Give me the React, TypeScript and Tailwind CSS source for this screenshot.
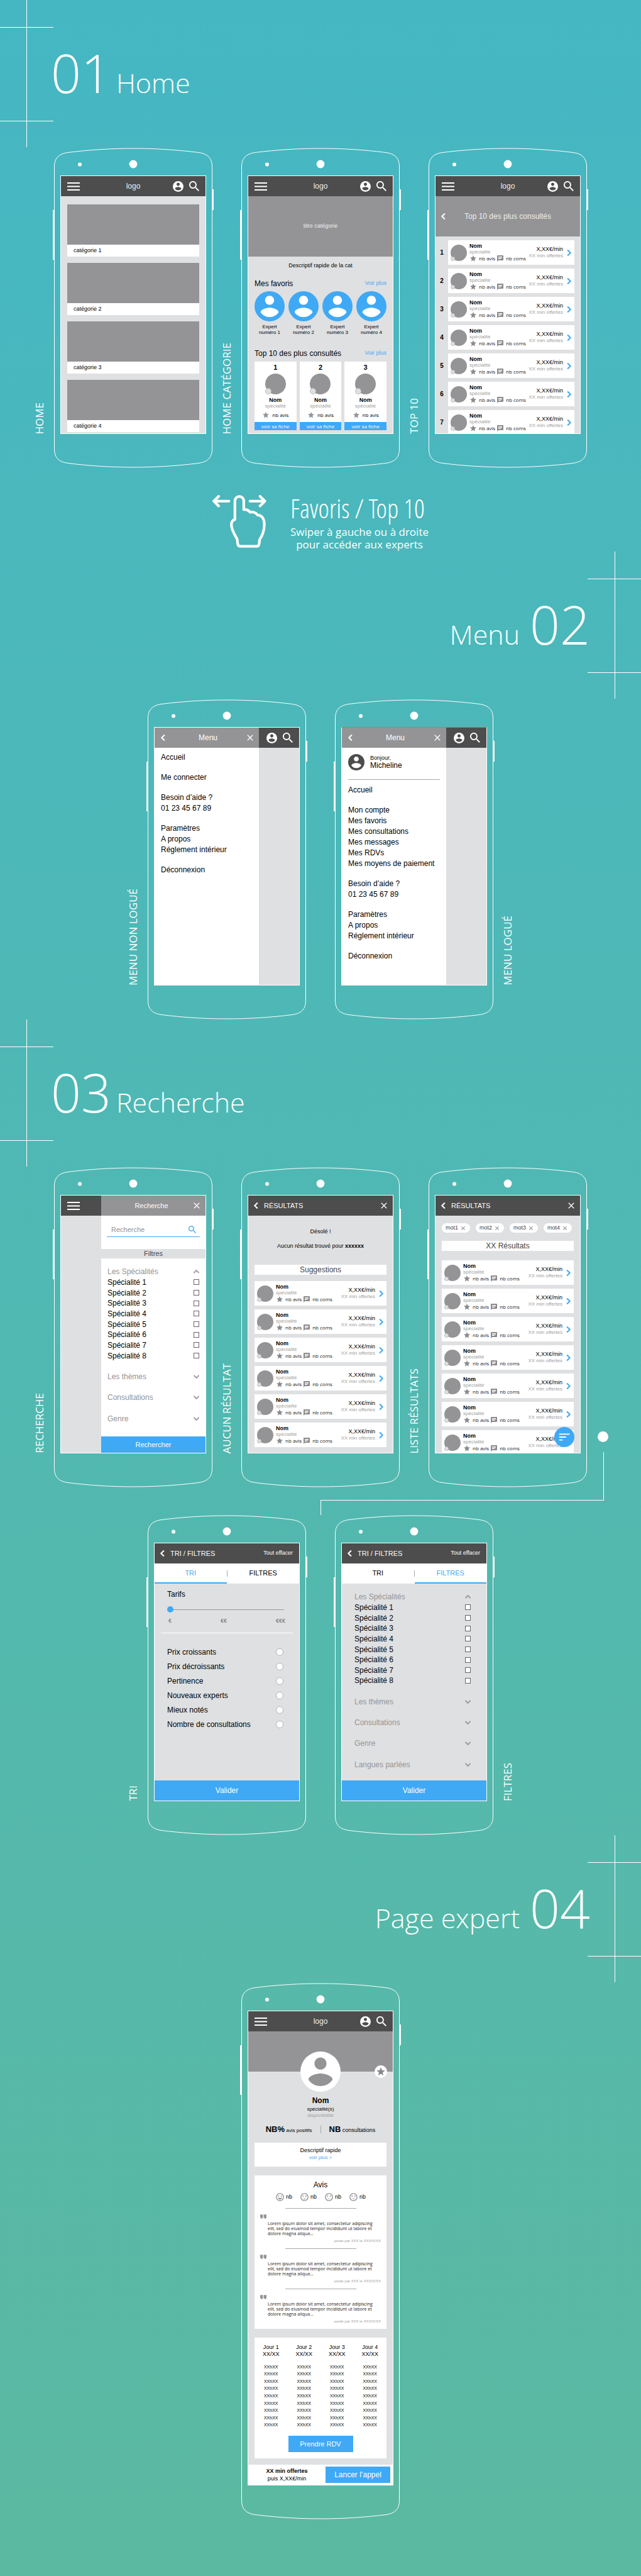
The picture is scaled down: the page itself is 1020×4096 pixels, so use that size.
import React from "react";
import {
  MdClose,
  MdSentimentDissatisfied,
  MdSentimentNeutral,
  MdSentimentSatisfied,
  MdSentimentVerySatisfied,
  MdSort,
  MdStar,
  MdChat,
} from "react-icons/md";

type Children = { children?: React.ReactNode };

/* ---------- icons ---------- */

const PERSON =
  "M12 5c1.66 0 3 1.34 3 3s-1.34 3-3 3-3-1.34-3-3 1.34-3 3-3zm0 14.2c-2.5 0-4.71-1.28-6-3.22.03-1.99 4-3.08 6-3.08 1.99 0 5.97 1.09 6 3.08-1.29 1.94-3.5 3.22-6 3.22z";

function Account({ className, ring, person }: { className: string; ring: string; person: string }) {
  return (
    <svg viewBox="2 2 20 20" className={className} aria-hidden="true">
      <circle cx="12" cy="12" r="10" fill={ring} />
      <path d={PERSON} fill={person} />
    </svg>
  );
}

function Search({ className }: { className: string }) {
  return (
    <svg viewBox="3 3 17.5 17.5" className={className} fill="currentColor" aria-hidden="true">
      <path d="M15.5 14h-.79l-.28-.27C15.41 12.59 16 11.11 16 9.5 16 5.91 13.09 3 9.5 3S3 5.91 3 9.5 5.91 16 9.5 16c1.61 0 3.09-.59 4.23-1.57l.27.28v.79l5 4.99L20.49 19l-4.99-5zm-6 0C7.01 14 5 11.99 5 9.5S7.01 5 9.5 5 14 7.01 14 9.5 11.99 14 9.5 14z" />
    </svg>
  );
}

function Burger() {
  return (
    <button aria-label="Ouvrir le menu" className="block w-5">
      <svg viewBox="0 0 20 13" className="h-[13px] w-5" fill="#fff" aria-hidden="true">
        <rect width="20" height="2" />
        <rect y="5.5" width="20" height="2" />
        <rect y="11" width="20" height="2" />
      </svg>
    </button>
  );
}

function Chevron({ dir, className }: { dir: "left" | "right" | "up" | "down"; className: string }) {
  const shapes = {
    left: { box: "8 6 8 12", d: "M15.41 7.41 14 6l-6 6 6 6 1.41-1.41L10.83 12z" },
    right: { box: "8 6 8 12", d: "M10 6 8.59 7.41 13.17 12l-4.58 4.59L10 18l6-6z" },
    up: { box: "6 8 12 8", d: "m12 8-6 6 1.41 1.41L12 10.83l4.59 4.58L18 14z" },
    down: { box: "6 8 12 8", d: "M16.59 8.59 12 13.17 7.41 8.59 6 10l6 6 6-6z" },
  };
  return (
    <svg
      viewBox={shapes[dir].box}
      className={className}
      fill="currentColor"
      stroke="currentColor"
      strokeWidth="0.6"
      aria-hidden="true"
    >
      <path d={shapes[dir].d} />
    </svg>
  );
}

function Quote() {
  return (
    <svg viewBox="5 7 15 10" className="h-[7px] w-[10px] text-[#949496]" fill="currentColor" aria-hidden="true">
      <path d="M5 7h6.4v7.6L9.600 17H7.200V15H5zM13.300 7H20v7.600L18 17H15.500V15H13.300z" />
    </svg>
  );
}

function SwipeHand() {
  return (
    <svg
      viewBox="38 48 305 300"
      className="h-[85px] w-[86px]"
      fill="none"
      stroke="#fff"
      strokeWidth="15"
      strokeLinecap="round"
      strokeLinejoin="round"
      aria-hidden="true"
    >
      <path d="M165 186V81a25 25 0 0 1 50 0v49c15-2 27 4 36 15 17-4 33 3 41 15 24 1 38 20 39 52 0 42-12 66-27 88-1 27-4 37-15 37h-94c-13 0-15-10-17-40-15-25-33-54-33-82 0-15 8-26 20-29z" />
      <path d="M47 82h84M73 55 46 82l27 27M250 82h84M307 55l27 27-27 27" />
    </svg>
  );
}

/* ---------- page furniture ---------- */

function Cross({ side }: { side: "left" | "right" }) {
  const x = side === "left" ? 42 : 43;
  return (
    <svg viewBox="0 0 85 234" className="h-[234px] w-[85px] shrink-0" fill="#fff" aria-hidden="true">
      <rect x={x} width="1" height="234" />
      <rect y="43" width="85" height="1" />
      <rect y="192" width="85" height="1" />
    </svg>
  );
}

function SectionTitle({ number, name, side }: { number: string; name: string; side: "left" | "right" }) {
  const left = side === "left";
  return (
    <header className={left ? "flex h-[235px]" : "flex h-[235px] flex-row-reverse"}>
      <Cross side={side} />
      <h2
        className={
          left
            ? "-mx-1 flex items-baseline gap-2 pt-[74px] font-light"
            : "-mx-1 flex flex-row-reverse items-baseline gap-4 pt-[74px] font-light"
        }
      >
        <span className="text-[84px] leading-[84px]">{number}</span>
        <span className="text-[43px] leading-[43px]">{name}</span>
      </h2>
    </header>
  );
}

function SideLabel({ children, right }: Children & { right?: boolean }) {
  return (
    <div className={right ? "flex h-[455px] w-[42px] items-end pl-[11px]" : "flex h-[455px] w-[42px] items-end justify-end pr-[11px]"}>
      <span className="rotate-180 text-[17px] leading-[20px] whitespace-nowrap [writing-mode:vertical-rl]">{children}</span>
    </div>
  );
}

function Phone({ children, tall, tint = "bg-[#dfe0e2]" }: Children & { tall?: boolean; tint?: string }) {
  const h = tall ? 853 : 509;
  return (
    <div className="relative w-[256px] px-3 pt-[44px] pb-[54px]">
      <svg viewBox={`0 0 256 ${h}`} className="absolute inset-0 h-full w-full" fill="#fff" aria-hidden="true">
        <path
          d={`M2.500 30C2.500 17 9 9.500 24 7.500C60 3 95 1 128 1C161 1 196 3 232 7.500C247 9.500 253.500 17 253.500 30V${h - 30}C253.500 ${h - 17} 247 ${h - 9.5} 232 ${h - 7.5}C196 ${h - 3} 161 ${h - 1} 128 ${h - 1}C95 ${h - 1} 60 ${h - 3} 24 ${h - 7.5}C9 ${h - 9.5} 2.500 ${h - 17} 2.500 ${h - 30}Z`}
          fill="none"
          stroke="#fff"
        />
        <circle cx="128" cy="26" r="6.400" />
        <circle cx="43" cy="26.500" r="3" />
        <rect x="0" y="99" width="2.500" height="79" />
        <rect x="253.500" y="66" width="2.500" height="33" />
      </svg>
      <div
        className={`relative flex flex-col overflow-hidden border border-white font-['Liberation_Sans',Arial,sans-serif] text-black ${tint} ${
          tall ? "h-[755px]" : "h-[411px]"
        }`}
      >
        {children}
      </div>
    </div>
  );
}

/* ---------- screen parts ---------- */

function UserActions() {
  return (
    <div className="flex items-center justify-end gap-[9px] text-white">
      <button aria-label="Mon compte">
        <Account className="block h-[17px] w-[17px]" ring="#fff" person="#4d4d4d" />
      </button>
      <button aria-label="Rechercher">
        <Search className="block h-4 w-4" />
      </button>
    </div>
  );
}

function LogoBar() {
  return (
    <div className="grid h-8 shrink-0 grid-cols-[1fr_auto_1fr] items-center bg-[#4d4d4d] px-[10px]">
      <Burger />
      <span className="text-[12px] text-[#eee]">logo</span>
      <UserActions />
    </div>
  );
}

function CloseButton() {
  return (
    <button aria-label="Fermer" className="text-white">
      <MdClose className="block h-4 w-4" />
    </button>
  );
}

function BackButton() {
  return (
    <button aria-label="Retour" className="text-white">
      <Chevron dir="left" className="block h-[10px] w-[7px]" />
    </button>
  );
}

function TitleBar({ title, children }: Children & { title: string }) {
  return (
    <div className="flex h-8 shrink-0 items-center bg-[#4d4d4d] pr-[6px] pl-[9px] text-white">
      <BackButton />
      <span className="ml-[9px] flex-1 text-[11px]">{title}</span>
      {children}
    </div>
  );
}

function Portrait({ size, dot }: { size: string; dot: string }) {
  return (
    <span className={`relative block shrink-0 rounded-full bg-[#949496] ${size}`}>
      <span className={`absolute bottom-0 left-0 rounded-full border border-[#bbb] bg-[#dfe0e2] ${dot}`} />
    </span>
  );
}

function ExpertCard() {
  return (
    <article className="flex h-[39px] shrink-0 grow items-center bg-white pr-[5px] pl-[4px]">
      <Portrait size="h-[26px] w-[26px]" dot="h-[7px] w-[7px]" />
      <div className="ml-[4px] flex flex-col">
        <span className="text-[9px] leading-[10px] font-bold">Nom</span>
        <span className="text-[8px] leading-[9px] text-[#a0a0a0]">spécialité</span>
        <span className="flex items-center font-['Open_Sans',sans-serif] text-[8px] leading-[12px] text-[#222]">
          <MdStar className="h-3 w-3 text-[#8a8a8c]" />
          <span className="ml-[3px]">nb avis</span>
          <MdChat className="ml-[2px] h-3 w-3 text-[#8a8a8c]" />
          <span className="ml-[3px]">nb coms</span>
        </span>
      </div>
      <div className="ml-auto text-right">
        <p className="text-[9px] leading-[11px]">X,XX€/min</p>
        <p className="text-[8px] leading-[10px] text-[#a0a0a0]">XX min offertes</p>
      </div>
      <button aria-label="Voir la fiche" className="ml-[6px] text-[#3fa9f5]">
        <Chevron dir="right" className="block h-[10px] w-[7px]" />
      </button>
    </article>
  );
}

function ResultHeading({ children }: Children) {
  return <h3 className="h-4 shrink-0 bg-white text-center text-[12px] leading-4 text-[#444]">{children}</h3>;
}

function CheckRow({ label }: { label: string }) {
  return (
    <label className="flex items-center justify-between">
      {label}
      <input type="checkbox" className="h-[9px] w-[9px] appearance-none border border-[#666] bg-white" />
    </label>
  );
}

function FilterList({ groups, className }: { groups: string[]; className: string }) {
  return (
    <div className={`grid auto-rows-fr text-[12px] leading-none ${className}`}>
      <button className="flex items-center justify-between text-[#949496]">
        Les Spécialités
        <Chevron dir="up" className="h-[6px] w-[9px]" />
      </button>
      {[1, 2, 3, 4, 5, 6, 7, 8].map((n) => (
        <CheckRow key={n} label={`Spécialité ${n}`} />
      ))}
      {groups.map((g) => (
        <React.Fragment key={g}>
          <span aria-hidden="true" />
          <button className="flex items-center justify-between text-[#949496]">
            {g}
            <Chevron dir="down" className="h-[6px] w-[9px]" />
          </button>
        </React.Fragment>
      ))}
    </div>
  );
}

/* ---------- screens ---------- */

function HomeScreen() {
  return (
    <Phone>
      <LogoBar />
      <div className="flex flex-col gap-[10px] px-[10px] pt-[13px]">
        {[1, 2, 3, 4].map((n) => (
          <a key={n} href="#categorie" className="block">
            <span className="block h-16 bg-[#949496]" />
            <span className="block h-[19px] bg-white pl-[10px] text-[9px] leading-[18px]">catégorie {n}</span>
          </a>
        ))}
      </div>
    </Phone>
  );
}

function RowTitle({ children }: Children) {
  return (
    <div className="flex h-4 items-center justify-between">
      <h3 className="text-[12px] leading-4">{children}</h3>
      <a href="#plus" className="text-[9px] text-[#3fa9f5]">
        Voir plus
      </a>
    </div>
  );
}

function CategoryScreen() {
  return (
    <Phone>
      <LogoBar />
      <div className="flex h-24 shrink-0 items-center justify-center bg-[#949496] text-[9px] text-[#eee]">titre catégorie</div>
      <p className="mt-2 text-center text-[9px] leading-[12px]">Descriptif rapide de la cat</p>
      <div className="mt-[15px] px-[10px]">
        <RowTitle>Mes favoris</RowTitle>
        <div className="mt-1 flex justify-between">
          {[1, 2, 3, 4].map((n) => (
            <div key={n} className="w-12">
              <Account className="block h-12 w-12" ring="#3fa9f5" person="#fff" />
              <p className="mt-1 text-center text-[8px] leading-[9px]">
                Expert
                <br />
                numéro {n}
              </p>
            </div>
          ))}
        </div>
      </div>
      <div className="mt-[21px] px-[10px]">
        <RowTitle>Top 10 des plus consultés</RowTitle>
        <div className="mt-[5px] grid grid-cols-3 gap-[5px]">
          {[1, 2, 3].map((n) => (
            <article key={n} className="flex flex-col items-center bg-white pt-1">
              <span className="text-[11px] leading-[11px] font-bold">{n}</span>
              <span className="mt-1">
                <Portrait size="h-[33px] w-[33px]" dot="h-[10px] w-[10px]" />
              </span>
              <span className="mt-1 text-[9px] leading-[10px] font-bold">Nom</span>
              <span className="text-[8px] leading-[9px] text-[#a0a0a0]">spécialité</span>
              <span className="mt-1 flex items-center gap-1 font-['Open_Sans',sans-serif] text-[8px] leading-[12px]">
                <MdStar className="h-3 w-3 text-[#949496]" />
                nb avis
              </span>
              <button className="mt-[5px] w-full bg-[#3fa9f5] font-['Open_Sans',sans-serif] text-[8px] leading-[13px] text-white">
                voir sa fiche
              </button>
            </article>
          ))}
        </div>
      </div>
    </Phone>
  );
}

function TopTenScreen() {
  return (
    <Phone>
      <LogoBar />
      <div className="grid h-16 shrink-0 grid-cols-[1fr_auto_1fr] items-center bg-[#949496] px-[9px] text-[12px] text-[#eee]">
        <BackButton />
        <h3>Top 10 des plus consultés</h3>
      </div>
      <ol className="flex flex-col gap-[6px] pt-[6px] pr-[9px]">
        {[1, 2, 3, 4, 5, 6, 7].map((n) => (
          <li key={n} className="flex items-center">
            <span className="w-5 text-center text-[10px] font-bold">{n}</span>
            <ExpertCard />
          </li>
        ))}
      </ol>
    </Phone>
  );
}

function MenuScreen({ items, user }: { items: string[]; user?: string }) {
  return (
    <Phone tint={user ? "border-t-[#f15a5a] bg-[#dfe0e2]" : "bg-[#dfe0e2]"}>
      <div className="grid flex-1 grid-cols-[1fr_64px] grid-rows-[32px_1fr]">
        <div className="grid grid-cols-[1fr_auto_1fr] items-center bg-[#949496] pr-[6px] pl-[10px] text-[12px] text-white">
          <BackButton />
          <span>Menu</span>
          <span className="flex justify-end">
            <CloseButton />
          </span>
        </div>
        <div className="flex items-center justify-end bg-[#4d4d4d] pr-[10px]">
          <UserActions />
        </div>
        <nav className="bg-white px-[10px] pt-[7px]">
          {user && (
            <div className="mb-2 flex items-center gap-[9px] border-b border-[#aaa] pt-[3px] pb-[14px]">
              <Account className="h-[26px] w-[26px]" ring="#4d4d4d" person="#fff" />
              <p className="text-[12px] leading-[13px]">
                <span className="block text-[9px] leading-[11px]">Bonjour,</span>
                {user}
              </p>
            </div>
          )}
          <ul className="text-[12px] leading-[17px]">
            {items.map((item, i) =>
              item ? (
                <li key={i}>
                  <a href="#menu">{item}</a>
                </li>
              ) : (
                <li key={i} className="h-[15px]" aria-hidden="true" />
              ),
            )}
          </ul>
        </nav>
      </div>
    </Phone>
  );
}

function SearchScreen() {
  return (
    <Phone>
      <div className="grid flex-1 grid-cols-[64px_1fr] grid-rows-[32px_1fr]">
        <div className="flex items-center bg-[#4d4d4d] pl-[10px]">
          <Burger />
        </div>
        <div className="grid grid-cols-[1fr_auto_1fr] items-center bg-[#949496] pr-[6px] text-[11px] text-white">
          <span className="col-start-2">Recherche</span>
          <span className="flex justify-end">
            <CloseButton />
          </span>
        </div>
        <form className="col-start-2 flex flex-col bg-white">
          <label className="mx-[9px] mt-[10px] flex h-6 items-center border-b border-[#3fa9f5] pr-[6px] pl-[7px] text-[#3fa9f5]">
            <input
              type="search"
              aria-label="Recherche"
              placeholder="Recherche"
              className="w-full min-w-0 text-[11px] leading-4 placeholder:text-[#949496]"
            />
            <Search className="h-3 w-3 shrink-0" />
          </label>
          <h3 className="mt-[19px] h-[15px] bg-[#dfe0e2] text-center text-[11px] leading-[15px] text-[#444]">Filtres</h3>
          <FilterList groups={["Les thèmes", "Consultations", "Genre"]} className="mx-[10px] mt-[13px] h-[250px]" />
          <button type="button" className="mt-auto h-[26px] bg-[#3fa9f5] text-[11px] text-white">
            Rechercher
          </button>
        </form>
      </div>
    </Phone>
  );
}

function NoResultScreen() {
  return (
    <Phone>
      <TitleBar title="RÉSULTATS">
        <CloseButton />
      </TitleBar>
      <div className="mt-[20px] text-center text-[9px] leading-[11px]">
        <p>Désolé !</p>
        <p className="mt-[12px]">
          Aucun résultat trouvé pour <b>xxxxxx</b>
        </p>
      </div>
      <div className="mt-6 px-[10px]">
        <ResultHeading>Suggestions</ResultHeading>
        <div className="mt-[10px] flex flex-col gap-[6px]">
          {[1, 2, 3, 4, 5, 6].map((n) => (
            <ExpertCard key={n} />
          ))}
        </div>
      </div>
    </Phone>
  );
}

function ResultsScreen() {
  return (
    <Phone>
      <TitleBar title="RÉSULTATS">
        <CloseButton />
      </TitleBar>
      <div className="flex flex-col px-[10px] pt-[12px]">
        <div className="flex gap-[9px]">
          {["mot1", "mot2", "mot3", "mot4"].map((m) => (
            <button
              key={m}
              className="flex h-[15px] w-[45px] items-center justify-center gap-[3px] rounded-full bg-white text-[9px] text-[#444]"
            >
              {m}
              <MdClose className="h-[10px] w-[10px] text-[#777]" />
            </button>
          ))}
        </div>
        <div className="mt-[13px]">
          <ResultHeading>XX Résultats</ResultHeading>
        </div>
        <div className="mt-[15px] flex flex-col gap-[6px]">
          {[1, 2, 3, 4, 5, 6, 7].map((n) => (
            <ExpertCard key={n} />
          ))}
        </div>
      </div>
      <button
        aria-label="Trier et filtrer"
        className="absolute right-[9px] bottom-[9px] flex h-8 w-8 items-center justify-center rounded-full bg-[#3fa9f5] text-white"
      >
        <MdSort className="h-[22px] w-[22px]" />
      </button>
    </Phone>
  );
}

function SortTabs({ active }: { active: "TRI" | "FILTRES" }) {
  const on = "border-b-2 border-[#3fa9f5] text-[#3fa9f5]";
  const off = "border-b-2 border-white text-black";
  return (
    <>
      <TitleBar title="TRI / FILTRES">
        <button className="pr-[4px] text-[9px]">Tout effacer</button>
      </TitleBar>
      <div className="grid h-8 shrink-0 grid-cols-[1fr_1px_1fr] items-center bg-white text-[11px]">
        <button className={`h-8 ${active === "TRI" ? on : off}`}>TRI</button>
        <span className="h-[10px] bg-[#aaa]" />
        <button className={`h-8 ${active === "FILTRES" ? on : off}`}>FILTRES</button>
      </div>
    </>
  );
}

function ValidateButton() {
  return <button className="mt-auto h-8 shrink-0 bg-[#3fa9f5] text-[12px] text-white">Valider</button>;
}

function SortScreen() {
  return (
    <Phone>
      <SortTabs active="TRI" />
      <div className="mx-[10px] border-b border-white px-[10px] pt-[10px] pb-[14px]">
        <label htmlFor="tarifs" className="block text-[12px] leading-[14px]">
          Tarifs
        </label>
        <input
          id="tarifs"
          type="range"
          min="0"
          max="2"
          defaultValue="0"
          className="mt-[12px] block h-[11px] w-[186px] appearance-none bg-transparent [&::-webkit-slider-runnable-track]:h-px [&::-webkit-slider-runnable-track]:bg-[#999] [&::-webkit-slider-thumb]:-mt-[5px] [&::-webkit-slider-thumb]:h-[10px] [&::-webkit-slider-thumb]:w-[10px] [&::-webkit-slider-thumb]:appearance-none [&::-webkit-slider-thumb]:rounded-full [&::-webkit-slider-thumb]:bg-[#3fa9f5]"
        />
        <div className="mt-[7px] flex justify-between px-[2px] text-[9px] leading-[10px] text-[#666]">
          <span>€</span>
          <span>€€</span>
          <span>€€€</span>
        </div>
      </div>
      <div className="mt-[18px] pr-[25px] pl-[20px] text-[12px]">
        {[
          "Prix croissants",
          "Prix décroissants",
          "Pertinence",
          "Nouveaux experts",
          "Mieux notés",
          "Nombre de consultations",
        ].map((o) => (
          <label key={o} className="flex h-[23px] items-center justify-between">
            {o}
            <input type="radio" name="tri" className="h-3 w-3 appearance-none rounded-full border border-[#b3b3b3] bg-white" />
          </label>
        ))}
      </div>
      <ValidateButton />
    </Phone>
  );
}

function FilterScreen() {
  return (
    <Phone>
      <SortTabs active="FILTRES" />
      <FilterList
        groups={["Les thèmes", "Consultations", "Genre", "Langues parlées"]}
        className="mt-[13px] mr-[25px] ml-[20px] h-[283px]"
      />
      <ValidateButton />
    </Phone>
  );
}

function Review() {
  return (
    <article className="flex flex-col pb-2">
      <hr className="mx-auto w-[113px] border-t border-[#aaa]" />
      <div className="mt-[9px]">
        <Quote />
      </div>
      <p className="mt-1 ml-[12px] font-['Open_Sans',sans-serif] text-[7px] leading-[8px] text-[#222]">
        Lorem ipsum dolor sit amet, consectetur adipiscing
        <br />
        elit, sed do eiusmod tempor incididunt ut labore et
        <br />
        dolore magna aliqua...
      </p>
      <p className="mt-[3px] text-right text-[6px] leading-[8px] text-[#a0a0a0]">posté par XXX le XX/XX/XX</p>
    </article>
  );
}

function ExpertScreen() {
  const faces = [MdSentimentVerySatisfied, MdSentimentSatisfied, MdSentimentNeutral, MdSentimentDissatisfied];
  return (
    <Phone tall>
      <LogoBar />
      <div className="relative h-16 shrink-0 bg-[#949496]">
        <button
          aria-label="Ajouter aux favoris"
          className="absolute right-[9px] -bottom-[10px] flex h-5 w-5 items-center justify-center rounded-full bg-white text-[#8a8a8c]"
        >
          <MdStar className="h-[16px] w-[16px]" />
        </button>
      </div>
      <div className="relative -mt-8 flex flex-col items-center self-center">
        <Account className="h-16 w-16" ring="#fff" person="#949496" />
        <h3 className="mt-[7px] text-[12px] leading-[14px] font-bold">Nom</h3>
        <p className="mt-px text-[8px] leading-[11px]">spécialité(s)</p>
        <p className="text-[8px] leading-[10px] text-[#a0a0a0]">disponibilité</p>
      </div>
      <div className="mt-[9px] flex h-4 shrink-0 items-center justify-center">
        <p className="text-[8px]">
          <b className="text-[13px] leading-4">NB%</b> avis positifs
        </p>
        <span className="mx-[13px] h-3 w-px bg-[#aaa]" />
        <p className="text-[9px]">
          <b className="text-[13px] leading-4">NB</b> consultations
        </p>
      </div>
      <div className="mx-[10px] mt-[13px] shrink-0 bg-white pt-[6px] pb-[9px] text-center">
        <p className="text-[9px] leading-[12px]">Descriptif rapide</p>
        <a href="#descriptif" className="mt-px block text-[8px] leading-[10px] text-[#3fa9f5]">
          voir plus &gt;
        </a>
      </div>
      <div className="mx-[10px] mt-[14px] shrink-0 bg-white px-[9px] pt-2">
        <h3 className="text-center text-[12px] leading-[14px]">Avis</h3>
        <div className="mt-[5px] flex justify-center gap-[12px] text-[9px]">
          {faces.map((Face, i) => (
            <span key={i} className="flex items-center gap-[2px]">
              <Face className="h-[15px] w-[15px] text-[#8a8a8c]" />
              nb
            </span>
          ))}
        </div>
        <div className="mt-[10px]">
          <Review />
          <Review />
          <Review />
        </div>
      </div>
      <div className="mx-[10px] mt-[14px] flex shrink-0 flex-col items-center bg-white pt-[10px] pb-[10px]">
        <table className="h-[135px] w-full table-fixed text-center">
          <thead>
            <tr className="h-[31px] align-top text-[9px] leading-[11px]">
              {[1, 2, 3, 4].map((d) => (
                <th key={d} className="font-normal">
                  Jour {d}
                  <br />
                  XX/XX
                </th>
              ))}
            </tr>
          </thead>
          <tbody className="text-[7px] leading-[10px]">
            {Array.from({ length: 9 }, (_, r) => (
              <tr key={r}>
                {[1, 2, 3, 4].map((d) => (
                  <td key={d}>XXhXX</td>
                ))}
              </tr>
            ))}
          </tbody>
        </table>
        <button className="mt-[11px] h-[26px] w-[103px] bg-[#3fa9f5] text-[11px] text-white">Prendre RDV</button>
      </div>
      <div className="mt-auto flex h-8 shrink-0 items-center bg-white pr-[4px]">
        <p className="flex-1 text-center text-[9px] leading-[12px]">
          <b>XX min offertes</b>
          <br />
          puis X,XX€/min
        </p>
        <button className="h-[26px] w-[103px] bg-[#3fa9f5] text-[12px] text-white">Lancer l’appel</button>
      </div>
    </Phone>
  );
}

/* ---------- page ---------- */

const GUEST_MENU = [
  "Accueil", "", "Me connecter", "", "Besoin d’aide ?", "01 23 45 67 89", "",
  "Paramètres", "A propos", "Réglement intérieur", "", "Déconnexion",
];

const MEMBER_MENU = [
  "Accueil", "", "Mon compte", "Mes favoris", "Mes consultations", "Mes messages", "Mes RDVs",
  "Mes moyens de paiement", "", "Besoin d’aide ?", "01 23 45 67 89", "",
  "Paramètres", "A propos", "Réglement intérieur", "", "Déconnexion",
];

export default function App() {
  return (
    <main className="overflow-hidden bg-linear-to-b from-[#45b7c3] to-[#5bb9a1] pb-[90px] font-['Open_Sans',sans-serif] text-white">
      <section>
        <SectionTitle number="01" name="Home" side="left" />
        <div className="flex justify-center pr-[42px]">
          <SideLabel>HOME</SideLabel>
          <HomeScreen />
          <SideLabel>HOME CATÉGORIE</SideLabel>
          <CategoryScreen />
          <SideLabel>TOP 10</SideLabel>
          <TopTenScreen />
        </div>
        <div className="flex h-[133px] items-start justify-center gap-[38px] pt-[43px]">
          <SwipeHand />
          <div>
            <p className="font-['Open_Sans_Condensed_Light','Open_Sans_Light_Condensed','Open_Sans',sans-serif] text-[42px] leading-[42px] font-light">
              Favoris / Top 10
            </p>
            <p className="mt-[7px] text-center text-[17px] leading-[20px]">
              Swiper à gauche ou à droite
              <br />
              pour accéder aux experts
            </p>
          </div>
        </div>
      </section>

      <section>
        <SectionTitle number="02" name="Menu" side="right" />
        <div className="flex justify-center">
          <SideLabel>MENU NON LOGUÉ</SideLabel>
          <MenuScreen items={GUEST_MENU} />
          <span className="w-[42px]" />
          <MenuScreen items={MEMBER_MENU} user="Micheline" />
          <SideLabel right>MENU LOGUÉ</SideLabel>
        </div>
      </section>

      <section>
        <SectionTitle number="03" name="Recherche" side="left" />
        <div className="relative">
          <span className="absolute top-[420px] left-[calc(50%+441px)] h-[17px] w-[17px] rounded-full bg-white" />
          <span className="absolute top-[453px] left-1/2 h-[77px] w-[451px] border-r border-b border-white" />
          <span className="absolute top-[529px] left-1/2 h-[24px] w-px bg-white" />
          <div className="flex justify-center pr-[42px]">
            <SideLabel>RECHERCHE</SideLabel>
            <SearchScreen />
            <SideLabel>AUCUN RÉSULTAT</SideLabel>
            <NoResultScreen />
            <SideLabel>LISTE RÉSULTATS</SideLabel>
            <ResultsScreen />
          </div>
          <div className="mt-[44px] flex justify-center">
            <SideLabel>TRI</SideLabel>
            <SortScreen />
            <span className="w-[42px]" />
            <FilterScreen />
            <SideLabel right>FILTRES</SideLabel>
          </div>
        </div>
      </section>

      <section>
        <SectionTitle number="04" name="Page expert" side="right" />
        <div className="flex justify-center">
          <ExpertScreen />
        </div>
      </section>
    </main>
  );
}
